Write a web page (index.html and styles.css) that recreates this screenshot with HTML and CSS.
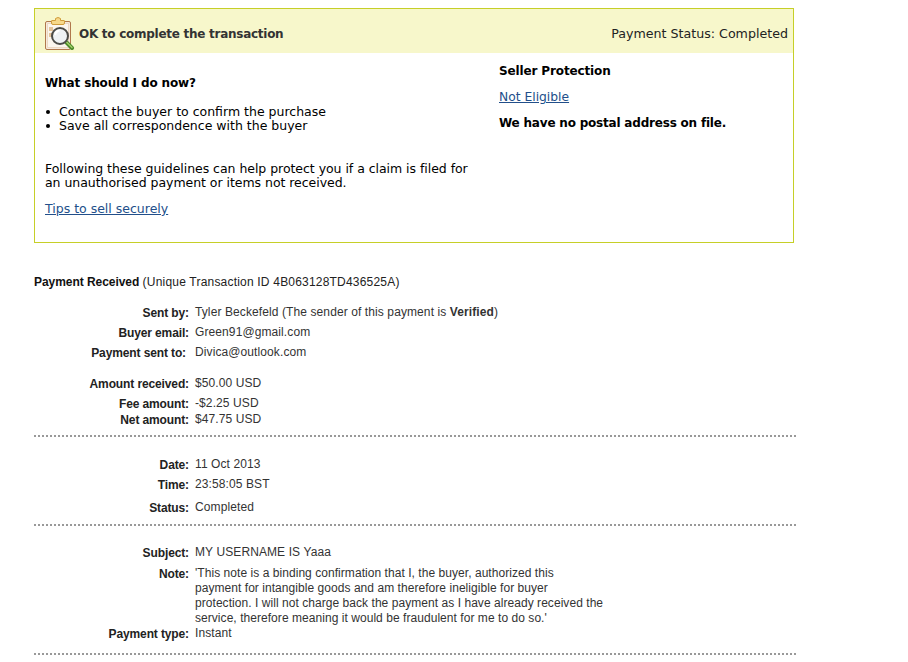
FILE: index.html
```html
<!DOCTYPE html>
<html lang="en">
<head>
<meta charset="utf-8">
<title>Payment details</title>
<link rel="stylesheet" href="styles.css">
</head>
<body>
<main class="page">
  <section class="box">
    <header class="box-head">
      <div class="head-title">
        <svg class="icon" width="30" height="33" viewBox="0 0 30 33" aria-hidden="true">
          <rect x="0.5" y="4.5" width="25" height="28" rx="1.5" fill="#f6e9dc" stroke="#b0784c"/>
          <rect x="2.5" y="6.5" width="21" height="24" fill="#fbf6ee" stroke="#ecd9c4"/>
          <path d="M6.5 6V4Q6.500 3.500 7 3.500H10.500V1.500Q13 -0.500 15.500 1.500V3.500H19Q19.500 3.500 19.500 4V6Q19.500 7.500 18 7.500H8Q6.500 7.500 6.500 6Z" fill="#f7d98a" stroke="#cf9c3c"/>
          <rect x="4" y="10" width="4" height="4" fill="#e3c39b"/>
          <rect x="4" y="16" width="4" height="4" fill="#e3c39b"/>
          <path d="M21 25L27 31" stroke="#4d8a2a" stroke-width="4" stroke-linecap="round"/>
          <path d="M21.500 25L27 30.500" stroke="#a5d36b" stroke-width="1.300" stroke-linecap="round"/>
          <circle cx="15" cy="19" r="8" fill="#eef2f4" stroke="#4c4c48" stroke-width="2"/>
          <path d="M10 18Q11 14 14.500 13.500" fill="none" stroke="#fff" stroke-width="2"/>
        </svg>
        <h1 class="title">OK to complete the transaction</h1>
      </div>
      <p class="status">Payment Status: Completed</p>
    </header>
    <div class="box-body">
      <div class="col-left">
        <h2 class="now">What should I do now?</h2>
        <ul class="todo">
          <li>Contact the buyer to confirm the purchase</li>
          <li>Save all correspondence with the buyer</li>
        </ul>
        <p class="guide">Following these guidelines can help protect you if a claim is filed for an unauthorised payment or items not received.</p>
        <a class="link tips" href="#">Tips to sell securely</a>
      </div>
      <div class="col-right">
        <h2 class="protect">Seller Protection</h2>
        <a class="link eligible" href="#">Not Eligible</a>
        <p class="postal">We have no postal address on file.</p>
      </div>
    </div>
  </section>

  <h2 class="received"><b>Payment Received</b> <span>(Unique Transaction ID 4B063128TD436525A)</span></h2>

  <section class="group first">
    <div class="row"><span class="label">Sent by:</span><span class="value">Tyler Beckefeld (The sender of this payment is <b>Verified</b>)</span></div>
    <div class="row"><span class="label">Buyer email:</span><span class="value">Green91@gmail.com</span></div>
    <div class="row"><span class="label label-in">Payment sent to:</span><span class="value">Divica@outlook.com</span></div>
    <div class="row after-gap"><span class="label">Amount received:</span><span class="value">$50.00 USD</span></div>
    <div class="row"><span class="label">Fee amount:</span><span class="value">-$2.25 USD</span></div>
    <div class="row tight"><span class="label">Net amount:</span><span class="value">$47.75 USD</span></div>
  </section>
  <hr class="rule one">

  <section class="group">
    <div class="row"><span class="label">Date:</span><span class="value">11 Oct 2013</span></div>
    <div class="row"><span class="label">Time:</span><span class="value">23:58:05 BST</span></div>
    <div class="row mid"><span class="label">Status:</span><span class="value">Completed</span></div>
  </section>
  <hr class="rule two">

  <section class="group last">
    <div class="row subject"><span class="label">Subject:</span><span class="value">MY USERNAME IS Yaaa</span></div>
    <div class="row"><span class="label">Note:</span><span class="value note">'This note is a binding confirmation that I, the buyer, authorized this<br>payment for intangible goods and am therefore ineligible for buyer<br>protection. I will not charge back the payment as I have already received the<br>service, therefore meaning it would be fraudulent for me to do so.'</span></div>
    <div class="row"><span class="label">Payment type:</span><span class="value">Instant</span></div>
  </section>
  <hr class="rule three">
</main>
</body>
</html>
```
FILE: styles.css
```css
* { box-sizing: border-box; }
html, body { margin: 0; padding: 0; background: #fff; }
body { height: 662px; overflow: hidden; color: #000; }
.page { padding: 8px 0 0 34px; width: 800px; font: 12px/15px "Liberation Sans", Arial, sans-serif; }
h1, h2, p, ul { margin: 0; padding: 0; font-size: inherit; }

.box { width: 760px; height: 235px; border: 1px solid #c6cf28; font: 12.5px/14px "DejaVu Sans", Verdana, sans-serif; }
.box-head { height: 44px; background: #f7f7cb; display: flex; justify-content: space-between; align-items: center; padding: 4px 5px 0 10px; }
.head-title { display: flex; align-items: center; gap: 4px; }
.icon { display: block; flex: none; }
.title, .now, .protect, .postal { font-size: 12px; letter-spacing: -0.13px; font-weight: bold; }
.title { color: #333; letter-spacing: -0.27px; padding-top: 1px; }
.status { color: #222; font-size: 12.65px; padding-top: 1px; }

.box-body { display: flex; padding: 0 10px; }
.col-left { width: 454px; }
.col-right { padding-top: 11px; }
.now { margin-top: 23px; }
.todo { list-style: none; margin-top: 15px; padding-left: 14px; }
.todo li { position: relative; }
.todo li::before { content: ""; position: absolute; left: -13px; top: 5px; width: 4px; height: 4px; border-radius: 50%; background: #000; }
.guide { margin-top: 29px; width: 440px; letter-spacing: -0.04px; }
.link { color: #224f8a; text-decoration: underline; display: block; }
.tips { margin-top: 12px; }
.eligible { margin-top: 12px; font-size: 12.3px; }
.postal { margin-top: 12px; letter-spacing: -0.2px; }

.received { margin-top: 32px; font-weight: normal; color: #222; }
.received b { color: #111; letter-spacing: -0.05px; }
.received span { letter-spacing: 0.2px; }

.group { width: 762px; padding-top: 20px; }
.group.first { margin-top: 15px; padding-top: 0; }
.group.last { padding-top: 19px; }
.row { display: grid; grid-template-columns: 155px 1fr; column-gap: 6px; min-height: 20px; }
.row.tight { min-height: 16px; margin-top: -4px; }
.row.after-gap { margin-top: 11px; }
.row.mid { margin-top: 3px; }
.row.subject { min-height: 21px; }
.label { font-weight: bold; text-align: right; padding-top: 1px; color: #222; letter-spacing: -0.12px; }
.label-in { padding-right: 3px; }
.value { color: #333; letter-spacing: 0.1px; }
.note { letter-spacing: 0.05px; }

.rule { width: 762px; height: 0; margin: 0; border: 0; border-top: 2px dotted #999; }
.rule.one { margin-top: 7px; }
.rule.two { margin-top: 4px; }
.rule.three { margin-top: 7px; }
```
